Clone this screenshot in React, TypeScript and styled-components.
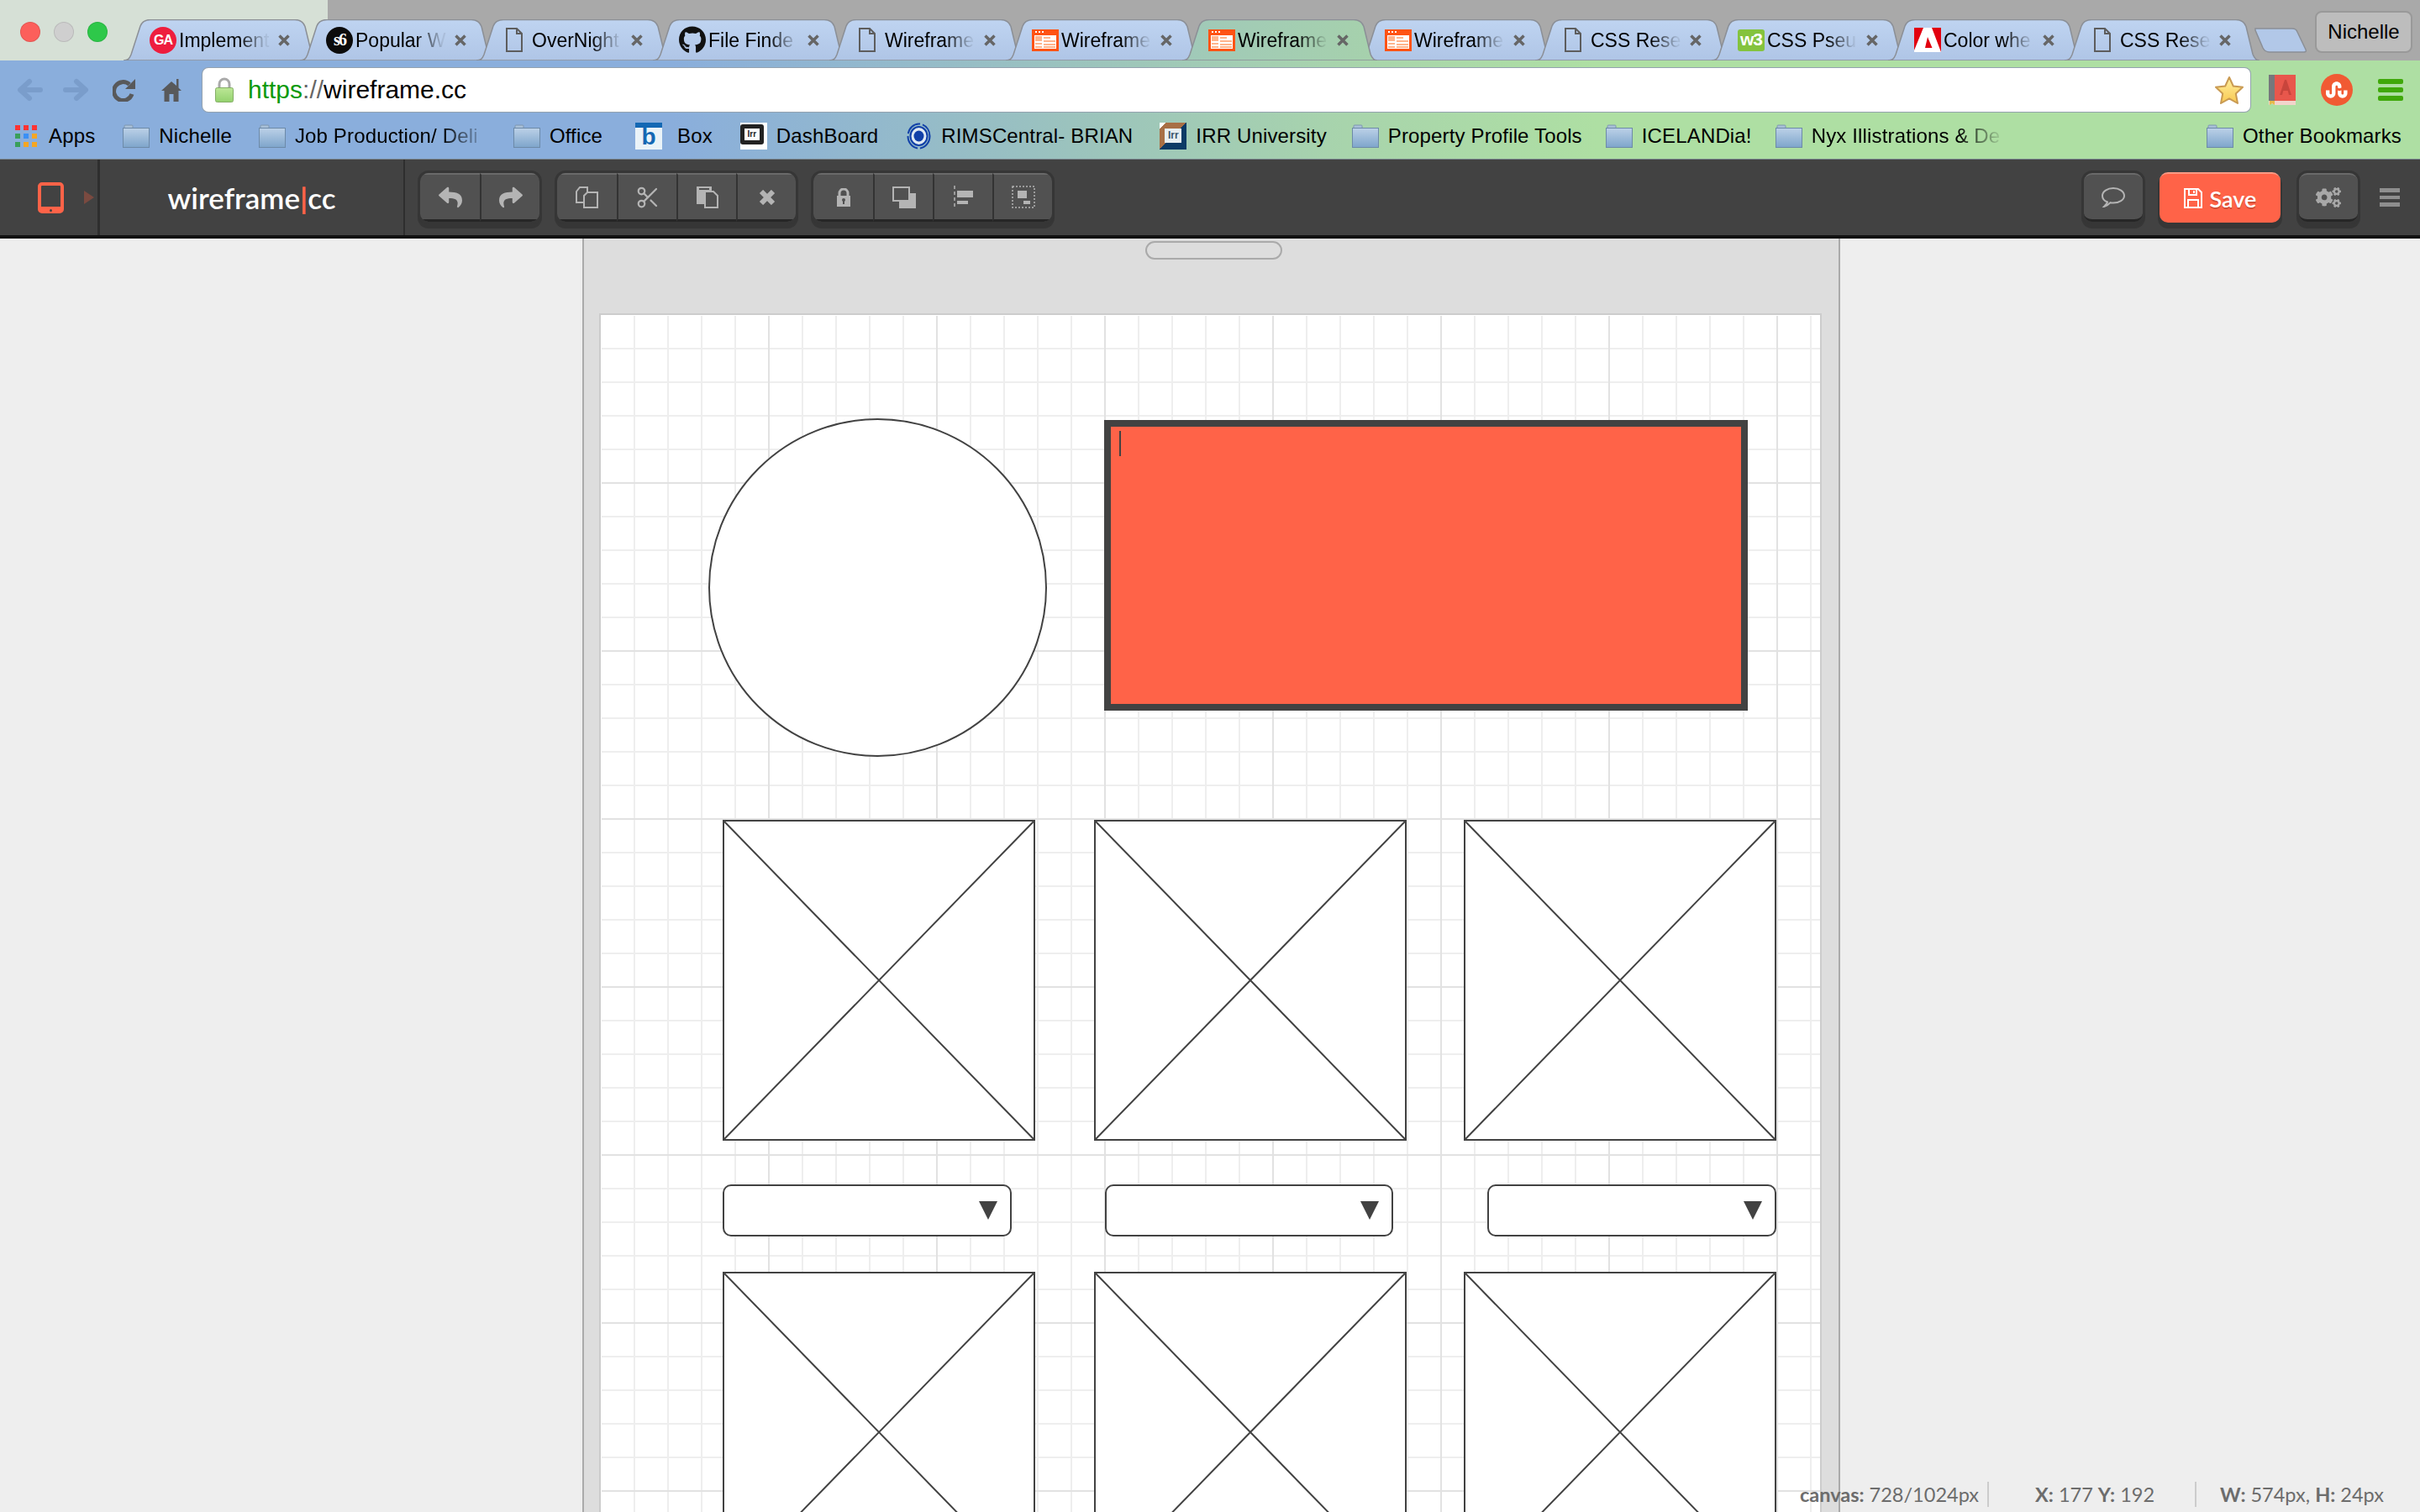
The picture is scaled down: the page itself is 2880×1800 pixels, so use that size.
import type { ReactNode } from "react";
import styled, { createGlobalStyle } from "styled-components";
import { FaCogs, FaGithub, FaReply, FaShare, FaStumbleupon } from "react-icons/fa";
import { Scissors } from "lucide-react";

const GlobalStyle = createGlobalStyle`
  html, body {
    margin: 0;
    padding: 0;
    background: #eee;
  }
  * {
    box-sizing: border-box;
  }
`;

const Page = styled.div`
  width: 2880px;
  height: 1800px;
  overflow: hidden;
  display: flex;
  flex-direction: column;
  font-family: "Liberation Sans", Arial, sans-serif;
  color: #000;
`;

/* browser chrome */
const TitleBar = styled.div`
  height: 72px;
  flex: none;
  display: flex;
  align-items: flex-end;
  background: linear-gradient(90deg, #d6e0d6 390px, #a9a9a9 390px);
`;

const Lights = styled.div`
  width: 147px;
  flex: none;
  align-self: flex-start;
  display: flex;
  gap: 16px;
  padding: 26px 0 0 24px;
`;

const Light = styled.span<{ $color: string }>`
  width: 24px;
  height: 24px;
  border-radius: 50%;
  background: ${(p) => p.$color};
  box-shadow: inset 0 0 0 1px rgba(0, 0, 0, 0.1);
`;

const TabStrip = styled.div`
  display: flex;
`;

const TabWrap = styled.div<{ $active?: boolean }>`
  position: relative;
  z-index: ${(p) => (p.$active ? 2 : 1)};
  width: 210px;
  height: 49px;
  flex: none;
  display: flex;
  align-items: center;
  padding: 0 0 0 31px;
`;

const TabShape = styled.svg`
  position: absolute;
  left: 0;
  top: 0;
`;

const TabIcon = styled.div`
  position: relative;
  width: 32px;
  height: 32px;
  flex: none;
  display: flex;
  align-items: center;
  justify-content: center;
`;

const TabLabel = styled.div`
  position: relative;
  width: 108px;
  margin-left: 3px;
  flex: none;
  font-size: 23px;
  line-height: 30px;
  white-space: nowrap;
  mask-image: linear-gradient(90deg, #000 66%, rgba(0, 0, 0, 0.08) 96%);
`;

const TabClose = styled.svg`
  position: relative;
  flex: none;
  margin-left: 10px;
`;

const NewTab = styled.svg`
  flex: none;
  margin: 0 0 9px 16px;
`;

const ProfileButton = styled.div`
  margin: 13px 9px 0 auto;
  align-self: flex-start;
  width: 116px;
  height: 50px;
  border: 2px solid #999;
  border-radius: 8px;
  background: #bdbdbd;
  font-size: 24px;
  display: flex;
  align-items: center;
  justify-content: center;
`;

const ChromeBars = styled.div`
  flex: none;
  background: linear-gradient(90deg, #8aaedc 800px, #9cc4bc 1300px, #a8d4ac 1600px, #aedfa3 1900px);
`;

const NavRow = styled.div`
  height: 62px;
  padding: 8px 20px 0;
  display: flex;
  align-items: center;
`;

const NavIcon = styled.svg<{ $gap?: number }>`
  flex: none;
  margin-left: ${(p) => p.$gap ?? 0}px;
`;

const AddressBar = styled.div`
  flex: 1;
  height: 54px;
  margin: 0 21px 0 24px;
  padding: 0 7px 0 15px;
  display: flex;
  align-items: center;
  background: #fff;
  border: 1px solid rgba(60, 85, 110, 0.55);
  border-radius: 8px;
`;

const Url = styled.div`
  margin-left: 17px;
  flex: 1;
  font-size: 30px;
  line-height: 40px;
  white-space: nowrap;
`;

const UrlScheme = styled.span`
  color: #0a9a0a;
`;

const UrlSlash = styled.span`
  color: #666;
`;

const StumbleBadge = styled.div`
  width: 38px;
  height: 38px;
  flex: none;
  margin-left: 30px;
  border-radius: 50%;
  background: #f15a33;
  color: #fff;
  display: flex;
  align-items: center;
  justify-content: center;
`;

const BookmarkBar = styled.div`
  height: 56px;
  padding: 0 22px 0 18px;
  display: flex;
  align-items: center;
  border-bottom: 1px solid #77828a;
`;

const Bookmark = styled.div<{ $before?: number; $iconGap?: number; $push?: boolean }>`
  display: flex;
  align-items: center;
  gap: ${(p) => p.$iconGap ?? 11}px;
  flex: none;
  margin-left: ${(p) => (p.$push ? "auto" : `${p.$before ?? 0}px`)};
`;

const BookmarkLabel = styled.span<{ $fade?: boolean }>`
  font-size: 24px;
  line-height: 30px;
  letter-spacing: 0.15px;
  white-space: nowrap;
  ${(p) =>
    p.$fade
      ? "width: 229px; mask-image: linear-gradient(90deg, #000 76%, transparent 100%);"
      : ""}
`;

const AppsGrid = styled.div`
  width: 26px;
  margin-right: 3px;
  display: grid;
  grid-template-columns: repeat(3, 6px);
  grid-auto-rows: 6px;
  gap: 4px;
`;

const AppsDot = styled.i<{ $color: string }>`
  background: ${(p) => p.$color};
`;

const GaBadge = styled.div`
  width: 32px;
  height: 32px;
  border-radius: 50%;
  background: #ee1d3e;
  border: 2px dotted #ee1d3e;
  outline: 1px solid #ee1d3e;
  outline-offset: -3px;
  color: #fff;
  font: 700 16px/28px "Liberation Sans Narrow", "Liberation Sans", sans-serif;
  letter-spacing: -1px;
  text-align: center;
`;

const SixBadge = styled.div`
  width: 32px;
  height: 32px;
  border-radius: 50%;
  background: #0c0c0c;
  color: #fff;
  font: 700 20px/30px "Liberation Serif", serif;
  letter-spacing: -2px;
  text-align: center;
`;

const W3Badge = styled.div`
  width: 32px;
  height: 26px;
  border-radius: 3px;
  background: #84c33e;
  color: #fff;
  font: 700 21px/24px "Liberation Sans", sans-serif;
  letter-spacing: -1px;
  text-align: center;
`;

const BoxBadge = styled.div`
  width: 32px;
  height: 32px;
  flex: none;
  background: linear-gradient(#1468b4 6px, #eaf3f8 6px);
  color: #1468b4;
  font: 700 28px/33px "Liberation Sans", sans-serif;
  text-align: center;
`;

const IrrBadge = styled.div`
  width: 32px;
  height: 32px;
  flex: none;
  background: linear-gradient(135deg, #fff 12%, #a86f45 12%, #a86f45 50%, #0c3a66 50%);
  display: flex;
  align-items: center;
  justify-content: center;
`;

const IrrInner = styled.span`
  width: 20px;
  height: 17px;
  background: #e8eef2;
  color: #3b556b;
  font: 700 12px/17px "Liberation Sans", sans-serif;
  text-align: center;
`;

const DashBadge = styled.div`
  width: 32px;
  height: 32px;
  flex: none;
  padding: 2px 4px 6px 0;
  background: #fff;
`;

const DashInner = styled.span`
  display: block;
  width: 100%;
  height: 100%;
  border: 5px solid #222;
  border-radius: 3px;
  color: #222;
  font: 700 10px/14px "Liberation Sans", sans-serif;
  text-align: center;
`;

/* wireframe.cc toolbar */
const AppBar = styled.div`
  height: 94px;
  flex: none;
  display: flex;
  align-items: stretch;
  background: #424242;
  border-bottom: 4px solid #111;
  font-family: Lato, "Open Sans", sans-serif;
`;

const DeviceCell = styled.div`
  width: 119px;
  flex: none;
  padding-left: 45px;
  display: flex;
  align-items: center;
  gap: 24px;
  border-right: 3px solid #2e2e2e;
`;

const DeviceFrame = styled.div`
  position: relative;
  width: 31px;
  height: 37px;
  flex: none;
  border: 4px solid #ff6348;
  border-bottom-width: 8px;
  border-radius: 5px;
  &::after {
    content: "";
    position: absolute;
    left: 10px;
    bottom: -6px;
    width: 3px;
    height: 3px;
    border-radius: 50%;
    background: #424242;
  }
`;

const DeviceArrow = styled.div`
  width: 0;
  height: 0;
  border-left: 12px solid #7a4a40;
  border-top: 8px solid transparent;
  border-bottom: 8px solid transparent;
`;

const LogoCell = styled.div`
  width: 363px;
  flex: none;
  display: flex;
  align-items: center;
  justify-content: center;
  border-right: 2px solid #2e2e2e;
  color: #fff;
  font-size: 35px;
  font-weight: 600;
`;

const LogoBar = styled.span`
  color: #ff6348;
  font-weight: 700;
`;

const Groups = styled.div`
  margin-left: 18px;
  display: flex;
  align-items: center;
  gap: 21px;
`;

const ButtonGroup = styled.div`
  display: flex;
  height: 58px;
  border-radius: 10px;
  overflow: hidden;
  box-shadow: 0 0 0 3px #363636, 0 5px 0 3px #363636;
`;

const ToolButton = styled.div`
  width: 71px;
  height: 58px;
  flex: none;
  display: flex;
  align-items: center;
  justify-content: center;
  background: #515151;
  border-top: 2px solid #6a6a6a;
  border-bottom: 3px solid #262626;
  color: #b4b4b4;
  & + & {
    border-left: 2px solid #333;
  }
`;

const RightTools = styled.div`
  margin-left: auto;
  padding-right: 24px;
  display: flex;
  align-items: center;
`;

const SingleButton = styled(ToolButton)<{ $gap?: number }>`
  width: 70px;
  margin-left: ${(p) => p.$gap ?? 0}px;
  border-radius: 10px;
  box-shadow: 0 0 0 3px #363636, 0 5px 0 3px #363636;
`;

const SaveButton = styled.div`
  width: 144px;
  height: 60px;
  margin-left: 20px;
  display: flex;
  align-items: center;
  justify-content: center;
  gap: 9px;
  border-radius: 10px;
  background: #ff6348;
  border-top: 2px solid #ff9a84;
  color: #fff;
  font-size: 27px;
  font-weight: 600;
  text-shadow: 0 2px 0 rgba(150, 50, 30, 0.45);
  box-shadow: 0 5px 0 2px #363636;
`;

const MenuLines = styled.div`
  width: 24px;
  margin-left: 26px;
  display: flex;
  flex-direction: column;
  gap: 4px;
`;

const MenuLine = styled.i`
  height: 4.5px;
  background: #8e8e8e;
`;

/* workspace */
const Stage = styled.div`
  position: relative;
  flex: 1;
  min-height: 0;
  overflow: hidden;
  padding-left: 3px;
  background: #eee;
`;

const DeviceBody = styled.div`
  width: 1497px;
  height: 100%;
  margin: 0 auto;
  padding: 3px 21px 0 18px;
  background: #ddd;
  border-left: 2px solid #aaa;
  border-right: 2px solid #aaa;
  overflow: hidden;
`;

const DeviceHandle = styled.div`
  width: 163px;
  height: 22px;
  margin-left: 650px;
  border: 2px solid #aaa;
  border-radius: 12px;
`;

const Canvas = styled.div`
  position: relative;
  width: 1455px;
  height: 2048px;
  margin-top: 64px;
  border: solid #ccc;
  border-width: 2px 2px 0 2px;
  background-color: #fff;
  background-image:
    linear-gradient(90deg, #e2e2e2 2px, transparent 2px),
    linear-gradient(#e2e2e2 2px, transparent 2px),
    linear-gradient(90deg, #eee 2px, transparent 2px),
    linear-gradient(#eee 2px, transparent 2px);
  background-size: 200px 200px, 200px 200px, 40px 40px, 40px 40px;
  background-position: -1px -1px;
  box-shadow: inset 1px 1px 0 #fff;
`;

type Placed = { $x: number; $y: number; $w: number; $h: number };

const placed = (p: Placed) => `
  left: ${p.$x}px;
  top: ${p.$y}px;
  width: ${p.$w}px;
  height: ${p.$h}px;
`;

const WireCircle = styled.div<Placed>`
  position: absolute;
  ${placed}
  border: 2px solid #424242;
  border-radius: 50%;
  background: #fff;
`;

const WireRect = styled.div<Placed>`
  position: absolute;
  ${placed}
  border: 8px solid #424242;
  background: #ff6348;
`;

const Caret = styled.div`
  width: 2px;
  height: 30px;
  margin: 5px 0 0 10px;
  background: #424242;
`;

const WireImage = styled.svg<Placed>`
  position: absolute;
  ${placed}
  background: #fff;
  border: 2px solid #424242;
  display: block;
`;

const WireSelect = styled.div<Placed>`
  position: absolute;
  ${placed}
  padding-right: 15px;
  display: flex;
  align-items: center;
  justify-content: flex-end;
  background: #fff;
  border: 2px solid #424242;
  border-radius: 10px;
`;

const SelectArrow = styled.div`
  width: 0;
  height: 0;
  border-top: 22px solid #424242;
  border-left: 11px solid transparent;
  border-right: 11px solid transparent;
`;

const Status = styled.div`
  position: absolute;
  right: 43px;
  bottom: 6px;
  display: flex;
  align-items: center;
  color: #6c6c6c;
  font-family: Lato, "Open Sans", sans-serif;
  font-size: 23.5px;
  line-height: 30px;
  white-space: nowrap;
`;

const StatusCell = styled.div<{ $left: number; $right: number; $rule?: boolean }>`
  padding: 0 ${(p) => p.$right}px 0 ${(p) => p.$left}px;
  border-right: ${(p) => (p.$rule ? "2px solid #ccc" : "none")};
`;

const StatusKey = styled.b`
  font-weight: 700;
`;

const DocSvg = styled.svg`
  margin-left: -4px;
`;

const DocIcon = () => (
  <DocSvg width="20" height="29" viewBox="0 0 20 29">
    <path d="M1 1H13L19 7V28H1Z M13 1V7H19" fill="none" stroke="#5d5d5d" strokeWidth="2" />
  </DocSvg>
);

const WireframeIcon = () => (
  <svg width="32" height="26" viewBox="0 0 32 26">
    <rect width="32" height="26" fill="#ff5314" />
    <rect x="3" y="7" width="26" height="16" fill="#fff" />
    <rect x="4" y="2" width="2" height="2" fill="#fff" />
    <rect x="8" y="2" width="2" height="2" fill="#fff" />
    <rect x="12" y="2" width="2" height="2" fill="#fff" />
    <rect x="4" y="8" width="8" height="6" fill="#ffb48c" />
    <rect x="14" y="9" width="8" height="2" fill="#ffb48c" />
    <rect x="14" y="13" width="14" height="2" fill="#ffb48c" />
    <rect x="4" y="16" width="8" height="2" fill="#ffb48c" />
    <rect x="14" y="17" width="14" height="2" fill="#ffb48c" />
    <rect x="4" y="20" width="8" height="2" fill="#ffb48c" />
    <rect x="14" y="20" width="14" height="2" fill="#ffb48c" />
  </svg>
);

const AdobeIcon = () => (
  <svg width="32" height="29" viewBox="0 0 32 29">
    <rect width="32" height="29" fill="#fff" />
    <path d="M0 0H11L0 27Z M21 0H32V29Z M16 11L21.5 24H13Z" fill="#e2000f" />
  </svg>
);

const FolderIcon = () => (
  <svg width="32" height="28" viewBox="0 0 32 28">
    <defs>
      <linearGradient id="folderFill" x1="0" y1="0" x2="0" y2="1">
        <stop offset="0" stopColor="#bcd1e8" />
        <stop offset="1" stopColor="#7ea5cb" />
      </linearGradient>
    </defs>
    <path d="M2 4V2a1 1 0 0 1 1-1h8a1 1 0 0 1 1 1v2" fill="#a9c0d8" stroke="#7f97b0" />
    <rect x="0.5" y="4.5" width="31" height="23" fill="url(#folderFill)" stroke="#6d8aa8" />
  </svg>
);

const RimsIcon = () => (
  <svg width="29" height="32" viewBox="0 0 29 32">
    <ellipse cx="14.5" cy="16" rx="13" ry="14.5" fill="none" stroke="#1140a8" strokeWidth="2" strokeDasharray="20 3" />
    <ellipse cx="14.5" cy="16" rx="10" ry="11" fill="#dfe9f3" stroke="#1140a8" strokeWidth="2" />
    <ellipse cx="14.5" cy="16" rx="6" ry="6.5" fill="#1140a8" />
  </svg>
);

const tabs = [
  { label: "Implement", icon: <GaBadge>GA</GaBadge> },
  { label: "Popular W", icon: <SixBadge>s6</SixBadge> },
  { label: "OverNight", icon: <DocIcon /> },
  { label: "File Finde", icon: <FaGithub size={33} color="#111" /> },
  { label: "Wireframe", icon: <DocIcon /> },
  { label: "Wireframe", icon: <WireframeIcon /> },
  { label: "Wireframe", icon: <WireframeIcon />, active: true },
  { label: "Wireframe", icon: <WireframeIcon /> },
  { label: "CSS Rese", icon: <DocIcon /> },
  { label: "CSS Pseu", icon: <W3Badge>w3</W3Badge> },
  { label: "Color whe", icon: <AdobeIcon /> },
  { label: "CSS Rese", icon: <DocIcon /> },
];

const Tab = ({ label, icon, active }: { label: string; icon: ReactNode; active?: boolean }) => (
  <TabWrap $active={active}>
    <TabShape width="232" height="49" viewBox="0 0 232 49">
      <defs>
        <linearGradient id="tabIdle" x1="0" y1="0" x2="0" y2="1">
          <stop offset="0" stopColor="#bfd4f1" />
          <stop offset="1" stopColor="#afc5e6" />
        </linearGradient>
        <linearGradient id="tabActive" x1="0" y1="0" x2="1" y2="0">
          <stop offset="0" stopColor="#a0c9b9" />
          <stop offset="1" stopColor="#a6d1ac" />
        </linearGradient>
      </defs>
      <path
        d="M0 49c5 0 7-2 9-7L20 8C22 3 26 .5 32 .5H204c6 0 10 2.500 12 8l8 33c2 5 4 7.500 8 7.500Z"
        fill={active ? "url(#tabActive)" : "url(#tabIdle)"}
        stroke="#8b8f96"
        strokeWidth="1.500"
      />
    </TabShape>
    <TabIcon>{icon}</TabIcon>
    <TabLabel>{label}</TabLabel>
    <TabClose width="14" height="14" viewBox="0 0 14 14">
      <path d="M1.500 1.500L12.500 12.500M12.500 1.500L1.500 12.500" stroke="#666" strokeWidth="3.500" />
    </TabClose>
  </TabWrap>
);

const bookmarks: {
  label: string;
  before: number;
  icon?: ReactNode;
  iconGap?: number;
  fade?: boolean;
}[] = [
  { label: "Nichelle", before: 33 },
  { label: "Job Production/ Deli", before: 32, fade: true },
  { label: "Office", before: 31 },
  { label: "Box", before: 39, icon: <BoxBadge>b</BoxBadge>, iconGap: 18 },
  { label: "DashBoard", before: 33, icon: <DashBadge><DashInner>Irr</DashInner></DashBadge> },
  { label: "RIMSCentral- BRIAN", before: 34, icon: <RimsIcon />, iconGap: 12 },
  { label: "IRR University", before: 32, icon: <IrrBadge><IrrInner>Irr</IrrInner></IrrBadge> },
  { label: "Property Profile Tools", before: 30 },
  { label: "ICELANDia!", before: 28 },
  { label: "Nyx Illistrations & De", before: 28, fade: true },
];

const appsColors = ["#f33", "#f33", "#f33", "#3a9f5a", "#3a8ff5", "#f5a623", "#3a9f5a", "#f5a623", "#f5a623"];

const imageColumns = [145, 587, 1027];
const imageRows = [601, 1139];
const selects = [
  { x: 145, w: 344 },
  { x: 600, w: 343 },
  { x: 1055, w: 344 },
];

const PlaceholderImage = ({ x, y }: { x: number; y: number }) => (
  <WireImage $x={x} $y={y} $w={372} $h={382} viewBox="0 0 368 378" preserveAspectRatio="none">
    <path d="M0 0L368 378M368 0L0 378" stroke="#424242" strokeWidth="2" fill="none" />
  </WireImage>
);

export default function App() {
  return (
    <Page>
      <GlobalStyle />
      <TitleBar>
        <Lights>
          <Light $color="#fc5f5b" />
          <Light $color="#cfcfcf" />
          <Light $color="#2ec84a" />
        </Lights>
        <TabStrip>
          {tabs.map((t, i) => (
            <Tab key={i} {...t} />
          ))}
        </TabStrip>
        <NewTab width="63" height="30" viewBox="0 0 63 30">
          <path
            d="M1 1H45c3 0 5 1 6 4l10 21c1 2 0 3-2 3H18c-4 0-6-1-8-5L1 3Z"
            fill="#b2c8e8"
            stroke="#8b8f96"
            strokeWidth="1.500"
          />
        </NewTab>
        <ProfileButton>Nichelle</ProfileButton>
      </TitleBar>

      <ChromeBars>
        <NavRow>
          <NavIcon width="31" height="28" viewBox="0 0 31 28">
            <path d="M28 14H6M15 4L4 14L15 24" fill="none" stroke="#7a9dcb" strokeWidth="6" strokeLinecap="round" strokeLinejoin="round" />
          </NavIcon>
          <NavIcon $gap={24} width="31" height="28" viewBox="0 0 31 28">
            <path d="M3 14H25M16 4L27 14L16 24" fill="none" stroke="#7a9dcb" strokeWidth="6" strokeLinecap="round" strokeLinejoin="round" />
          </NavIcon>
          <NavIcon $gap={28} width="27" height="28" viewBox="0 0 27 28">
            <path d="M20 7.500A11 11 0 1 0 23 19" fill="none" stroke="#58595b" strokeWidth="5" />
            <path d="M27 1V13H15Z" fill="#58595b" />
          </NavIcon>
          <NavIcon $gap={31} width="24" height="27" viewBox="0 0 24 27">
            <path d="M12 3L0 14H3.500V27H9.500V18H14.500V27H20.500V14H24L20.500 10.500V0H18V8Z" fill="#58595b" />
          </NavIcon>
          <AddressBar>
            <svg width="22" height="30" viewBox="0 0 22 30">
              <defs>
                <linearGradient id="lockBody" x1="0" y1="0" x2="0" y2="1">
                  <stop offset="0" stopColor="#bce796" />
                  <stop offset="1" stopColor="#93d16e" />
                </linearGradient>
              </defs>
              <path d="M5 13V8a6 6 0 0 1 12 0v5" fill="none" stroke="#a9a9a9" strokeWidth="3" />
              <rect x="0.500" y="12.500" width="21" height="17" rx="2" fill="url(#lockBody)" stroke="#84ae66" />
            </svg>
            <Url>
              <UrlScheme>https</UrlScheme>
              <UrlSlash>://</UrlSlash>wireframe.cc
            </Url>
            <svg width="36" height="35" viewBox="0 0 36 35">
              <defs>
                <linearGradient id="starFill" x1="0" y1="0" x2="0" y2="1">
                  <stop offset="0" stopColor="#fff0a0" />
                  <stop offset="1" stopColor="#f8c850" />
                </linearGradient>
              </defs>
              <path
                d="M18 2L22.800 12.500L34 13.800L25.800 21.500L28 33L18 27.300L8 33L10.200 21.500L2 13.800L13.200 12.500Z"
                fill="url(#starFill)"
                stroke="#c99a52"
                strokeWidth="2"
                strokeLinejoin="round"
              />
            </svg>
          </AddressBar>
          <svg width="32" height="36" viewBox="0 0 32 36">
            <path d="M0 33V0H7V33Z" fill="#76787c" />
            <path d="M7 0H32V31H7Z" fill="#e8574c" />
            <path d="M13 24L19 6H21L27 24H24L22.700 19H17.300L16 24Z" fill="#c8453c" />
            <path d="M0 31H32V36H7L3 34L0 36Z" fill="#f2d4cc" />
            <path d="M1 31H7V36L4 34L1 36Z" fill="#e7b94a" />
          </svg>
          <StumbleBadge>
            <FaStumbleupon size={26} />
          </StumbleBadge>
          <NavIcon $gap={30} width="30" height="26" viewBox="0 0 30 26">
            <rect y="0" width="30" height="6" rx="2" fill="#3fa80a" />
            <rect y="10" width="30" height="6" rx="2" fill="#3fa80a" />
            <rect y="20" width="30" height="6" rx="2" fill="#3fa80a" />
          </NavIcon>
        </NavRow>

        <BookmarkBar>
          <Bookmark>
            <AppsGrid>
              {appsColors.map((c, i) => (
                <AppsDot key={i} $color={c} />
              ))}
            </AppsGrid>
            <BookmarkLabel>Apps</BookmarkLabel>
          </Bookmark>
          {bookmarks.map((b) => (
            <Bookmark key={b.label} $before={b.before} $iconGap={b.iconGap}>
              {b.icon ?? <FolderIcon />}
              <BookmarkLabel $fade={b.fade}>{b.label}</BookmarkLabel>
            </Bookmark>
          ))}
          <Bookmark $push>
            <FolderIcon />
            <BookmarkLabel>Other Bookmarks</BookmarkLabel>
          </Bookmark>
        </BookmarkBar>
      </ChromeBars>

      <AppBar>
        <DeviceCell>
          <DeviceFrame />
          <DeviceArrow />
        </DeviceCell>
        <LogoCell>
          wireframe<LogoBar>|</LogoBar>cc
        </LogoCell>
        <Groups>
          <ButtonGroup>
            <ToolButton><FaReply size={28} /></ToolButton>
            <ToolButton><FaShare size={28} /></ToolButton>
          </ButtonGroup>
          <ButtonGroup>
            <ToolButton>
              <svg width="27" height="26" viewBox="0 0 27 26" fill="none" stroke="currentColor" strokeWidth="2">
                <path d="M1 19V6L5 1H14V19Z" />
                <path d="M10 25V11L14 7H26V25Z" fill="#515151" />
              </svg>
            </ToolButton>
            <ToolButton><Scissors size={30} strokeWidth={1.8} /></ToolButton>
            <ToolButton>
              <svg width="26" height="26" viewBox="0 0 26 26">
                <path d="M0 0H18V21H0Z" fill="currentColor" />
                <rect x="3" y="2" width="12" height="2" fill="#515151" />
                <path d="M10 6H20L25 11V25H10Z" fill="#515151" stroke="currentColor" strokeWidth="2" />
              </svg>
            </ToolButton>
            <ToolButton>
              <svg width="20" height="18" viewBox="0 0 20 18">
                <path d="M3 2L17 16M17 2L3 16" stroke="currentColor" strokeWidth="6" />
              </svg>
            </ToolButton>
          </ButtonGroup>
          <ButtonGroup>
            <ToolButton>
              <svg width="18" height="22" viewBox="0 0 18 22">
                <path d="M4 10V6a5 5 0 0 1 10 0v4" fill="none" stroke="currentColor" strokeWidth="3" />
                <path d="M1 9H17V22H1Z" fill="currentColor" />
                <circle cx="9" cy="14" r="2" fill="#515151" />
                <rect x="8" y="14" width="2" height="5" fill="#515151" />
              </svg>
            </ToolButton>
            <ToolButton>
              <svg width="28" height="26" viewBox="0 0 28 26">
                <path d="M8 8H28V26H8Z" fill="currentColor" />
                <rect x="1" y="1" width="19" height="16" fill="#515151" stroke="currentColor" strokeWidth="2" />
              </svg>
            </ToolButton>
            <ToolButton>
              <svg width="23" height="27" viewBox="0 0 23 27">
                <path d="M1 0V27" stroke="currentColor" strokeWidth="1.500" strokeDasharray="4 3" />
                <rect x="4" y="6" width="19" height="8" fill="currentColor" />
                <rect x="4" y="18" width="13" height="4" fill="currentColor" />
              </svg>
            </ToolButton>
            <ToolButton>
              <svg width="28" height="27" viewBox="0 0 28 27">
                <rect x="1" y="1" width="26" height="25" fill="none" stroke="currentColor" strokeWidth="1.500" strokeDasharray="2 2" />
                <rect x="7" y="6" width="11" height="9" fill="currentColor" />
                <rect x="14" y="18" width="8" height="4" fill="currentColor" />
              </svg>
            </ToolButton>
          </ButtonGroup>
        </Groups>
        <RightTools>
          <SingleButton>
            <svg width="28" height="24" viewBox="0 0 28 24" fill="none" stroke="currentColor" strokeWidth="2">
              <path d="M7 17.500C3 16 1 13 1 10C1 5 7 1 14 1C21 1 27 5 27 10C27 15 21 18.500 14 18.500C12.500 18.500 11.500 18.400 10.500 18.200C9 20 6.500 22 3 23C5 21 6.500 19.500 7 17.500Z" />
            </svg>
          </SingleButton>
          <SaveButton>
            <svg width="22" height="24" viewBox="0 0 22 24" fill="none" stroke="currentColor" strokeWidth="2">
              <path d="M1 1H17L21 5V23H1Z" />
              <path d="M6 1V8H15V1" />
              <path d="M5 23V14H17V23" />
              <rect x="11" y="3" width="2" height="3" fill="currentColor" stroke="none" />
            </svg>
            Save
          </SaveButton>
          <SingleButton $gap={22}>
            <FaCogs size={30} color="#a8a8a8" />
          </SingleButton>
          <MenuLines>
            <MenuLine />
            <MenuLine />
            <MenuLine />
          </MenuLines>
        </RightTools>
      </AppBar>

      <Stage>
        <DeviceBody>
          <DeviceHandle />
          <Canvas>
            <WireCircle $x={128} $y={123} $w={403} $h={403} />
            <WireRect $x={599} $y={125} $w={766} $h={346}>
              <Caret />
            </WireRect>
            {imageRows.map((y) =>
              imageColumns.map((x) => <PlaceholderImage key={`${x}-${y}`} x={x} y={y} />)
            )}
            {selects.map((s) => (
              <WireSelect key={s.x} $x={s.x} $y={1035} $w={s.w} $h={62}>
                <SelectArrow />
              </WireSelect>
            ))}
          </Canvas>
        </DeviceBody>
        <Status>
          <StatusCell $left={0} $right={10} $rule>
            <StatusKey>canvas:</StatusKey> 728/1024px
          </StatusCell>
          <StatusCell $left={55} $right={48} $rule>
            <StatusKey>X:</StatusKey> 177 <StatusKey>Y:</StatusKey> 192
          </StatusCell>
          <StatusCell $left={28} $right={0}>
            <StatusKey>W:</StatusKey> 574px, <StatusKey>H:</StatusKey> 24px
          </StatusCell>
        </Status>
      </Stage>
    </Page>
  );
}
